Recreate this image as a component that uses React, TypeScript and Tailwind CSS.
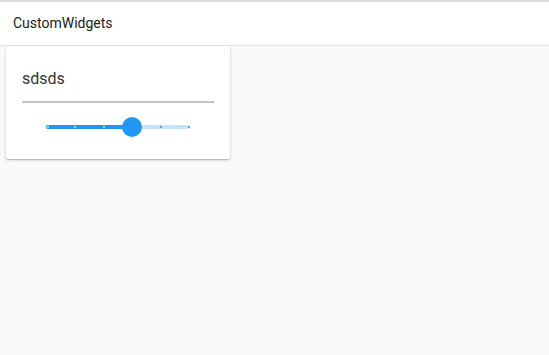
import React from "react";

const ticks = [0, 1, 2, 3, 4, 5];
const value = 3;
const max = 5;

function StepSlider() {
  const pct = (value / max) * 100;
  return (
    <div className="relative mx-auto h-5 w-[144px]">
      <div className="absolute left-0 right-0 top-[8px] h-[4px] rounded-full bg-[#c6e2fb]" />
      <div
        className="absolute left-0 top-[8px] h-[4px] rounded-full bg-[#2196f3]"
        style={{ width: `${pct}%` }}
      />
      {ticks.map((t) => (
        <div
          key={t}
          className={
            t <= value
              ? "absolute top-[9px] h-[2px] w-[2px] -translate-x-1/2 bg-[#a3d2fb]"
              : "absolute top-[9px] h-[2px] w-[2px] -translate-x-1/2 bg-[#4fa9f5]"
          }
          style={{ left: `calc(${(t / max) * 100}% + ${t === 0 ? 2 : t === max ? -1 : 0}px)` }}
        />
      ))}
      <div
        className="absolute top-0 h-5 w-5 -translate-x-1/2 rounded-full bg-[#2196f3]"
        style={{ left: `${pct}%` }}
      />
    </div>
  );
}

export default function App() {
  return (
    <div className="min-h-[355px] bg-[#fafafa] font-['Roboto',sans-serif]">
      <div className="h-[2px] bg-[#dcdcdc]" />
      <header className="flex h-[44px] items-center border-b border-[#e3e3e3] bg-white px-[13px]">
        <span className="text-[14px] text-[#212121]">CustomWidgets</span>
      </header>
      <div className="ml-[6px] flex w-[224px] flex-col rounded-[2px] bg-white px-4 pt-[23px] pb-[22px] shadow-[0_1px_3px_rgba(0,0,0,0.2),0_1px_1px_rgba(0,0,0,0.14)]">
        <div className="text-[16px] leading-[20px] text-[#333]">sdsds</div>
        <div className="mt-[12px] h-[2px] bg-[#c4c4c4]" />
        <div className="mt-[14px]">
          <StepSlider />
        </div>
      </div>
    </div>
  );
}
